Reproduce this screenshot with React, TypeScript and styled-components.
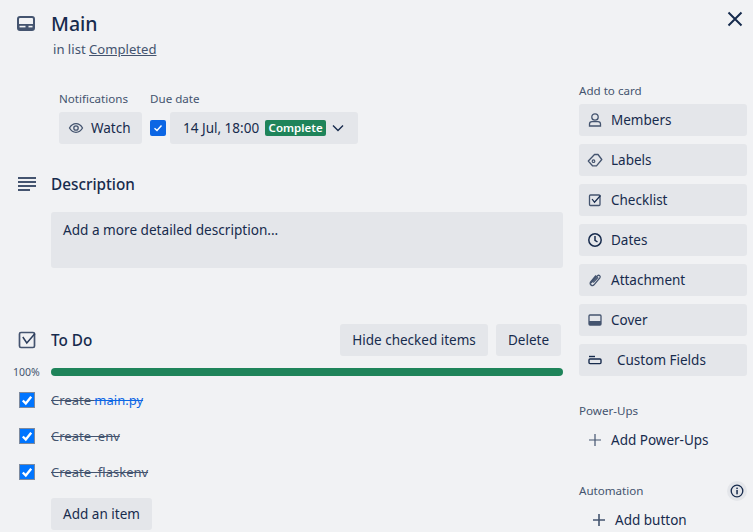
import React from "react";
import styled, { createGlobalStyle } from "styled-components";

const Global = createGlobalStyle`
  html, body { margin: 0; padding: 0; background: #f1f2f4; }
  body { font-family: "Noto Sans", "Open Sans", sans-serif; color: #172b4d; }
  * { box-sizing: border-box; }
`;

const Page = styled.div`
  position: relative;
  width: 753px;
  height: 532px;
  overflow: hidden;
  display: grid;
  grid-template-columns: 563px 168px;
  column-gap: 16px;
  background: #f1f2f4;
`;
const Close = styled.div`
  position: absolute;
  left: 725px;
  top: 9px;
  width: 20px;
  height: 20px;
  color: #172b4d;
`;
const Main = styled.div`
  display: flex;
  flex-direction: column;
`;
const Side = styled.div`
  display: flex;
  flex-direction: column;
  padding-top: 83px;
`;
const HeadRow = styled.div<{ $h: number; $top: number }>`
  display: flex;
  align-items: center;
  height: ${(p) => p.$h}px;
  margin-top: ${(p) => p.$top}px;
`;
const IconSlot = styled.div<{ $pad?: number }>`
  width: 51px;
  display: flex;
  padding-left: ${(p) => p.$pad ?? 17}px;
  color: #44546f;
`;
const Title = styled.div`
  font-size: 19.5px;
  font-weight: 500;
  color: #172b4d;
  line-height: 24px;
`;
const Sub = styled.div`
  margin: 3px 0 0 53px;
  font-size: 13.1px;
  line-height: 20px;
  color: #44546f;
  a { color: #44546f; text-decoration: underline; }
`;
const Meta = styled.div`
  display: flex;
  gap: 8px;
  margin: 33px 0 0 59px;
`;
const MetaCol = styled.div`
  display: flex;
  flex-direction: column;
`;
const Label = styled.div`
  font-size: 11.6px;
  line-height: 14px;
  font-weight: 400;
  color: #44546f;
  height: 20px;
`;
const Btn = styled.div`
  display: inline-flex;
  align-items: center;
  height: 32px;
  border-radius: 3px;
  background: #e4e6ea;
  color: #172b4d;
  font-size: 13.5px;
  font-weight: 400;
  white-space: nowrap;
`;
const WatchBtn = styled(Btn)`
  width: 83px;
  padding-left: 9px;
  gap: 7px;
  svg { color: #44546f; }
`;
const DueRow = styled.div`
  display: flex;
  align-items: center;
  gap: 4px;
`;
const DueCheck = styled.div`
  width: 16px;
  height: 16px;
  border-radius: 2px;
  background: #0c66e4;
  color: #fff;
  display: flex;
  align-items: center;
  justify-content: center;
`;
const DueBtn = styled(Btn)`
  width: 188px;
  padding-left: 13px;
`;
const Badge = styled.span`
  display: inline-block;
  margin-left: 6px;
  width: 61px;
  height: 16px;
  line-height: 16px;
  text-align: center;
  border-radius: 2px;
  background: #1f845a;
  color: #fff;
  font-size: 11.5px;
  font-weight: 600;
`;
const Chevron = styled.span`
  display: flex;
  margin-left: 4px;
  color: #172b4d;
`;
const SectionTitle = styled.div`
  font-size: 15.3px;
  font-weight: 500;
  color: #172b4d;
  flex: 1;
`;
const DescBox = styled.div`
  margin: 16px 0 0 51px;
  height: 56px;
  padding: 8px 12px;
  background: #e4e6ea;
  border-radius: 3px;
  font-size: 13.6px;
  line-height: 20px;
  font-weight: 400;
  color: #172b4d;
`;
const ActionGap = styled.div`
  display: flex;
  gap: 8px;
  margin-right: 2px;
`;
const TextBtn = styled(Btn)<{ $w: number }>`
  width: ${(p) => p.$w}px;
  justify-content: center;
`;
const ProgressRow = styled.div`
  display: flex;
  align-items: center;
  height: 8px;
  margin-top: 12px;
`;
const Pct = styled.div`
  width: 51px;
  padding-left: 13px;
  font-size: 10.5px;
  color: #44546f;
`;
const Bar = styled.div`
  flex: 1;
  height: 8px;
  border-radius: 4px;
  background: #1f845a;
`;
const Items = styled.div`
  display: flex;
  flex-direction: column;
  margin-top: 6px;
`;
const Item = styled.div`
  display: flex;
  align-items: center;
  height: 36px;
`;
const CheckSlot = styled.div`
  width: 51px;
  padding-left: 19px;
  display: flex;
`;
const Check = styled.div`
  width: 16px;
  height: 16px;
  background: #0075ff;
  border: 1px solid #7d8a9e;
  color: #fff;
  display: flex;
  align-items: center;
  justify-content: center;
`;
const ItemText = styled.div`
  font-size: 13px;
  color: #44546f;
  text-decoration: line-through;
  a { color: #0c66e4; text-decoration: line-through; }
`;
const AddItem = styled(Btn)`
  margin: 8px 0 0 51px;
  width: 101px;
  justify-content: center;
  align-self: flex-start;
`;
const SideLabel = styled.div<{ $mb?: number }>`
  display: flex;
  justify-content: space-between;
  align-items: center;
  height: 16px;
  font-size: 11.6px;
  font-weight: 400;
  color: #44546f;
  line-height: 16px;
  margin-bottom: ${(p) => p.$mb ?? 5}px;
`;
const SideList = styled.div`
  display: flex;
  flex-direction: column;
  gap: 8px;
`;
const SideBtn = styled(Btn)<{ $gap?: number }>`
  width: 168px;
  padding-left: 8px;
  gap: ${(p) => p.$gap ?? 8}px;
  svg { color: #44546f; flex: none; }
`;
const GhostBtn = styled(SideBtn)<{ $pad?: number; $top?: number }>`
  background: transparent;
  padding-left: ${(p) => p.$pad ?? 8}px;
  margin-top: ${(p) => p.$top ?? 0}px;
`;
const Group = styled.div<{ $top: number }>`
  margin-top: ${(p) => p.$top}px;
`;
const Info = styled.div`
  width: 20px;
  height: 20px;
  border-radius: 50%;
  background: #e4e6ea;
  color: #172b4d;
  display: flex;
  align-items: center;
  justify-content: center;
`;

const S = { width: 16, height: 16, viewBox: "0 0 16 16", fill: "none" } as const;

const CardIcon = () => (
  <svg width="18" height="16" viewBox="0 0 18 16" fill="none">
    <rect x="1" y="1" width="16" height="13" rx="2" stroke="currentColor" strokeWidth="2" />
    <rect x="1" y="8" width="16" height="6" fill="currentColor" />
    <rect x="2.5" y="9.8" width="6" height="1.6" fill="#f1f2f4" />
    <rect x="11.5" y="9.8" width="4" height="1.6" fill="#f1f2f4" />
  </svg>
);
const LinesIcon = () => (
  <svg width="18" height="14" viewBox="0 0 18 14" fill="currentColor">
    <rect x="0" y="0" width="18" height="2" />
    <rect x="0" y="4" width="18" height="2" />
    <rect x="0" y="8" width="18" height="2" />
    <rect x="0" y="12" width="12" height="2" />
  </svg>
);
const BoxCheckIcon = ({ size = 18 }: { size?: number }) => (
  <svg width={size} height={size} viewBox="0 0 18 18" fill="none">
    <rect x="1.5" y="1.5" width="15" height="15" rx="1.5" stroke="currentColor" strokeWidth="1.7" />
    <path d="M4.8 6 L8.8 12 L17 2.5" stroke="#2c3e5d" strokeWidth="1.5" />
  </svg>
);
const Tick = () => (
  <svg width="12" height="12" viewBox="0 0 12 12" fill="none">
    <path d="M1.8 6.5 L4.8 9.5 L10.2 2.8" stroke="currentColor" strokeWidth="2.4" />
  </svg>
);

export default function App() {
  return (
    <>
      <Global />
      <Page>
        <Close>
          <svg width="20" height="20" viewBox="0 0 20 20" fill="none">
            <path d="M3.5 3.5 L16.5 16.5 M16.5 3.5 L3.5 16.5" stroke="currentColor" strokeWidth="2" />
          </svg>
        </Close>
        <Main>
          <HeadRow $h={24} $top={12}>
            <IconSlot><CardIcon /></IconSlot>
            <Title>Main</Title>
          </HeadRow>
          <Sub>in list <a>Completed</a></Sub>
          <Meta>
            <MetaCol>
              <Label>Notifications</Label>
              <WatchBtn>
                <svg {...S}>
                  <path d="M1.5 8 C3.5 4.5 5.5 3.7 8 3.7 C10.5 3.7 12.5 4.5 14.5 8 C12.5 11.5 10.5 12.3 8 12.3 C5.5 12.3 3.5 11.5 1.5 8 Z" stroke="currentColor" strokeWidth="1.3" />
                  <circle cx="8" cy="8" r="2.2" stroke="currentColor" strokeWidth="1.3" />
                </svg>
                Watch
              </WatchBtn>
            </MetaCol>
            <MetaCol>
              <Label>Due date</Label>
              <DueRow>
                <DueCheck>
                  <svg width="10" height="10" viewBox="0 0 10 10" fill="none">
                    <path d="M1.5 5.2 L4 7.5 L8.5 2.5" stroke="currentColor" strokeWidth="1.4" />
                  </svg>
                </DueCheck>
                <DueBtn>
                  14 Jul, 18:00
                  <Badge>Complete</Badge>
                  <Chevron>
                    <svg {...S}>
                      <path d="M3 5.5 L8 10.5 L13 5.5" stroke="currentColor" strokeWidth="1.4" />
                    </svg>
                  </Chevron>
                </DueBtn>
              </DueRow>
            </MetaCol>
          </Meta>
          <HeadRow $h={24} $top={28}>
            <IconSlot $pad={18}><LinesIcon /></IconSlot>
            <SectionTitle>Description</SectionTitle>
          </HeadRow>
          <DescBox>Add a more detailed description...</DescBox>
          <HeadRow $h={32} $top={56}>
            <IconSlot $pad={18}><BoxCheckIcon /></IconSlot>
            <SectionTitle>To Do</SectionTitle>
            <ActionGap>
              <TextBtn $w={148}>Hide checked items</TextBtn>
              <TextBtn $w={65}>Delete</TextBtn>
            </ActionGap>
          </HeadRow>
          <ProgressRow>
            <Pct>100%</Pct>
            <Bar />
          </ProgressRow>
          <Items>
            <Item>
              <CheckSlot><Check><Tick /></Check></CheckSlot>
              <ItemText>Create <a>main.py</a></ItemText>
            </Item>
            <Item>
              <CheckSlot><Check><Tick /></Check></CheckSlot>
              <ItemText>Create .env</ItemText>
            </Item>
            <Item>
              <CheckSlot><Check><Tick /></Check></CheckSlot>
              <ItemText>Create .flaskenv</ItemText>
            </Item>
          </Items>
          <AddItem>Add an item</AddItem>
        </Main>
        <Side>
          <SideLabel>Add to card</SideLabel>
          <SideList>
            <SideBtn>
              <svg {...S}>
                <circle cx="8" cy="5" r="3.2" stroke="currentColor" strokeWidth="1.3" />
                <path d="M2.5 14 V12 C2.5 10.5 3.8 9.7 5 9.7 H11 C12.2 9.7 13.5 10.5 13.5 12 V14 Z" stroke="currentColor" strokeWidth="1.3" />
              </svg>
              Members
            </SideBtn>
            <SideBtn>
              <svg {...S}>
                <path d="M1.3 9 L7.5 2.5 L11 2.5 L14.8 7.5 L9.5 13.8 L5.5 13.8 Z" stroke="currentColor" strokeWidth="1.3" strokeLinejoin="round" />
                <circle cx="6.5" cy="9.2" r="1.3" stroke="currentColor" strokeWidth="1.2" />
              </svg>
              Labels
            </SideBtn>
            <SideBtn>
              <svg {...S}>
                <rect x="2.5" y="3" width="10.5" height="10.5" rx="1" stroke="currentColor" strokeWidth="1.3" />
                <path d="M5 7 L7.5 10.2 L13.5 3.5" stroke="#172b4d" strokeWidth="1.2" />
              </svg>
              Checklist
            </SideBtn>
            <SideBtn>
              <svg {...S}>
                <circle cx="8" cy="8" r="6.2" stroke="#172b4d" strokeWidth="1.5" />
                <path d="M8 4 V8.3 L10.5 10" stroke="#172b4d" strokeWidth="1.5" />
              </svg>
              Dates
            </SideBtn>
            <SideBtn>
              <svg {...S}>
                <path d="M4 11 L10.5 3.8 C11.8 2.5 13.8 3.7 13 5.6 L7 12.8 C5.5 14.5 2.2 13 3.5 10 L9 3.5" stroke="currentColor" strokeWidth="1.3" />
                <path d="M6.2 10.5 L11 5.3" stroke="currentColor" strokeWidth="1.3" />
              </svg>
              Attachment
            </SideBtn>
            <SideBtn>
              <svg {...S}>
                <rect x="2" y="3" width="12" height="10" rx="1" stroke="currentColor" strokeWidth="1.3" />
                <rect x="2" y="9" width="12" height="4" fill="currentColor" />
              </svg>
              Cover
            </SideBtn>
            <SideBtn $gap={14}>
              <svg {...S}>
                <path d="M2 4.5 H8" stroke="#172b4d" strokeWidth="1.4" />
                <rect x="2" y="7" width="12" height="4.6" rx="1" stroke="#172b4d" strokeWidth="1.4" />
              </svg>
              Custom Fields
            </SideBtn>
          </SideList>
          <Group $top={27}>
            <SideLabel>Power-Ups</SideLabel>
            <GhostBtn>
              <svg {...S}>
                <path d="M8 2 V14 M2 8 H14" stroke="currentColor" strokeWidth="1.2" />
              </svg>
              Add Power-Ups
            </GhostBtn>
          </Group>
          <Group $top={27}>
            <SideLabel $mb={4}>
              Automation
              <Info>
                <svg width="14" height="14" viewBox="0 0 14 14" fill="none">
                  <circle cx="7" cy="7" r="5.8" stroke="currentColor" strokeWidth="1.3" />
                  <rect x="6.3" y="6" width="1.5" height="4.3" fill="currentColor" />
                  <rect x="6.3" y="3.6" width="1.5" height="1.5" fill="currentColor" />
                </svg>
              </Info>
            </SideLabel>
            <GhostBtn $pad={12} $top={1}>
              <svg {...S}>
                <path d="M8 2 V14 M2 8 H14" stroke="#44546f" strokeWidth="1.6" />
              </svg>
              Add button
            </GhostBtn>
          </Group>
        </Side>
      </Page>
    </>
  );
}
